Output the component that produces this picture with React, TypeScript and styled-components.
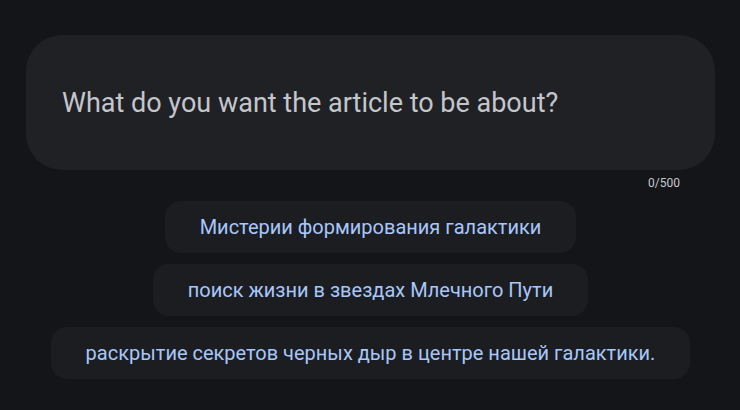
import React, { useState } from "react";
import styled, { createGlobalStyle } from "styled-components";

const Global = createGlobalStyle`
  html, body { margin: 0; padding: 0; background: #131519; }
  body { font-family: Roboto, "Noto Sans", Arial, sans-serif; }
`;

const Page = styled.div`
  width: 740px;
  height: 410px;
  box-sizing: border-box;
  padding: 35px 25px 0 26px;
  display: flex;
  flex-direction: column;
  align-items: center;
`;

const InputBox = styled.div`
  width: 689px;
  height: 135px;
  box-sizing: border-box;
  background: #1f2125;
  border-radius: 36px;
  display: flex;
  align-items: center;
  padding: 0 36px;
`;

const Input = styled.textarea`
  flex: 1;
  background: transparent;
  border: none;
  outline: none;
  resize: none;
  height: 36px;
  padding: 0;
  font-family: Roboto, Arial, sans-serif;
  font-size: 27px;
  line-height: 36px;
  color: #c4c6cc;
  overflow: hidden;
  &::placeholder { color: #c4c6cc; opacity: 1; }
`;

const Counter = styled.div`
  align-self: stretch;
  text-align: right;
  padding-right: 35px;
  margin-top: 6px;
  font-size: 12px;
  line-height: 14px;
  color: #c8c9cc;
`;

const Chips = styled.div`
  margin-top: 11px;
  display: flex;
  flex-direction: column;
  align-items: center;
  gap: 11px;
`;

const Chip = styled.button`
  height: 52px;
  padding: 0 35px;
  border: none;
  border-radius: 16px;
  background: #1b1d21;
  color: #a8c7fa;
  font-family: Roboto, Arial, sans-serif;
  font-size: 20px;
  cursor: pointer;
`;

const suggestions = [
  "Мистерии формирования галактики",
  "поиск жизни в звездах Млечного Пути",
  "раскрытие секретов черных дыр в центре нашей галактики.",
];

export default function App() {
  const [value, setValue] = useState("");
  return (
    <>
      <Global />
      <Page>
        <InputBox>
          <Input
            placeholder="What do you want the article to be about?"
            value={value}
            maxLength={500}
            onChange={(e) => setValue(e.target.value)}
          />
        </InputBox>
        <Counter>{value.length}/500</Counter>
        <Chips>
          {suggestions.map((s) => (
            <Chip key={s} onClick={() => setValue(s)}>
              {s}
            </Chip>
          ))}
        </Chips>
      </Page>
    </>
  );
}
